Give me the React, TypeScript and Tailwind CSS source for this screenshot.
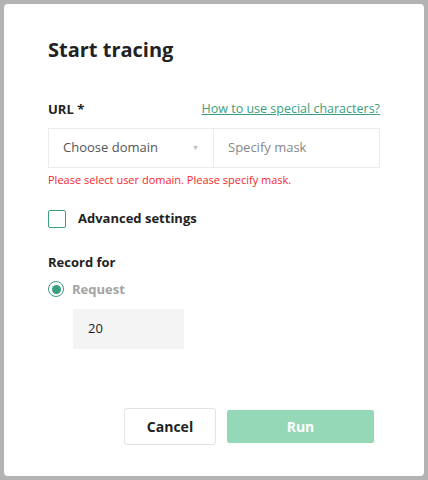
import React from 'react';

const App: React.FC = () => {
  return (
    <div className="h-[480px] w-[428px] bg-[#b3b3b3] p-[4px]" style={{ fontFamily: '"Open Sans", sans-serif' }}>
      <div className="flex h-full flex-col rounded-[4px] bg-white pl-[44px] pr-[44px] pt-[32px]">
        <h1 className="text-[20px] font-bold leading-[28px] text-[#222]">Start tracing</h1>

        {/* URL */}
        <div className="mt-[36px] flex items-center justify-between">
          <span className="text-[13px] font-bold leading-[18px] text-[#222]">URL *</span>
          <a href="#" className="text-[12.5px] leading-[18px] text-[#3a9e80] underline">
            How to use special characters?
          </a>
        </div>
        <div className="mt-[10px] flex">
          <div className="flex h-[40px] w-[166px] items-center justify-between border border-[#ececec] pl-[14px] pr-[14px]">
            <span className="text-[13px] text-[#555]">Choose domain</span>
            <span className="text-[7px] text-[#bbb]">▼</span>
          </div>
          <div className="flex h-[40px] w-[166px] items-center border border-l-0 border-[#ececec] pl-[14px]">
            <span className="text-[13px] text-[#888]">Specify mask</span>
          </div>
        </div>
        <p className="mt-[4px] text-[11px] leading-[16px] text-[#f52828]">
          Please select user domain. Please specify mask.
        </p>

        {/* Advanced */}
        <label className="mt-[21px] flex items-center gap-[12px]">
          <span className="h-[18px] w-[18px] rounded-[2px] border border-[#3a9e80]" />
          <span className="text-[13px] font-bold text-[#222]">Advanced settings</span>
        </label>

        <div className="mt-[24px] text-[13px] font-bold leading-[18px] text-[#222]">Record for</div>
        <label className="mt-[9px] flex items-center gap-[8px]">
          <span className="flex h-[16px] w-[16px] items-center justify-center rounded-full border border-[#3a9e80]">
            <span className="h-[9px] w-[9px] rounded-full bg-[#3a9e80]" />
          </span>
          <span className="text-[13px] font-bold text-[#a3a3a3]">Request</span>
        </label>
        <div className="ml-[25px] mt-[10px] flex h-[40px] w-[111px] items-center bg-[#f4f4f4] pl-[15px] text-[13px] text-[#222]">
          20
        </div>

        {/* Buttons */}
        <div className="mt-[59px] flex items-center pl-[76px]">
          <button className="h-[37px] w-[92px] rounded-[3px] border border-[#e3e3e3] bg-white text-[14px] font-bold text-[#222]">
            Cancel
          </button>
          <button className="ml-[11px] h-[33px] w-[147px] rounded-[2px] bg-[#95d8b8] text-[14px] font-bold text-white">
            Run
          </button>
        </div>
      </div>
    </div>
  );
};

export default App;
